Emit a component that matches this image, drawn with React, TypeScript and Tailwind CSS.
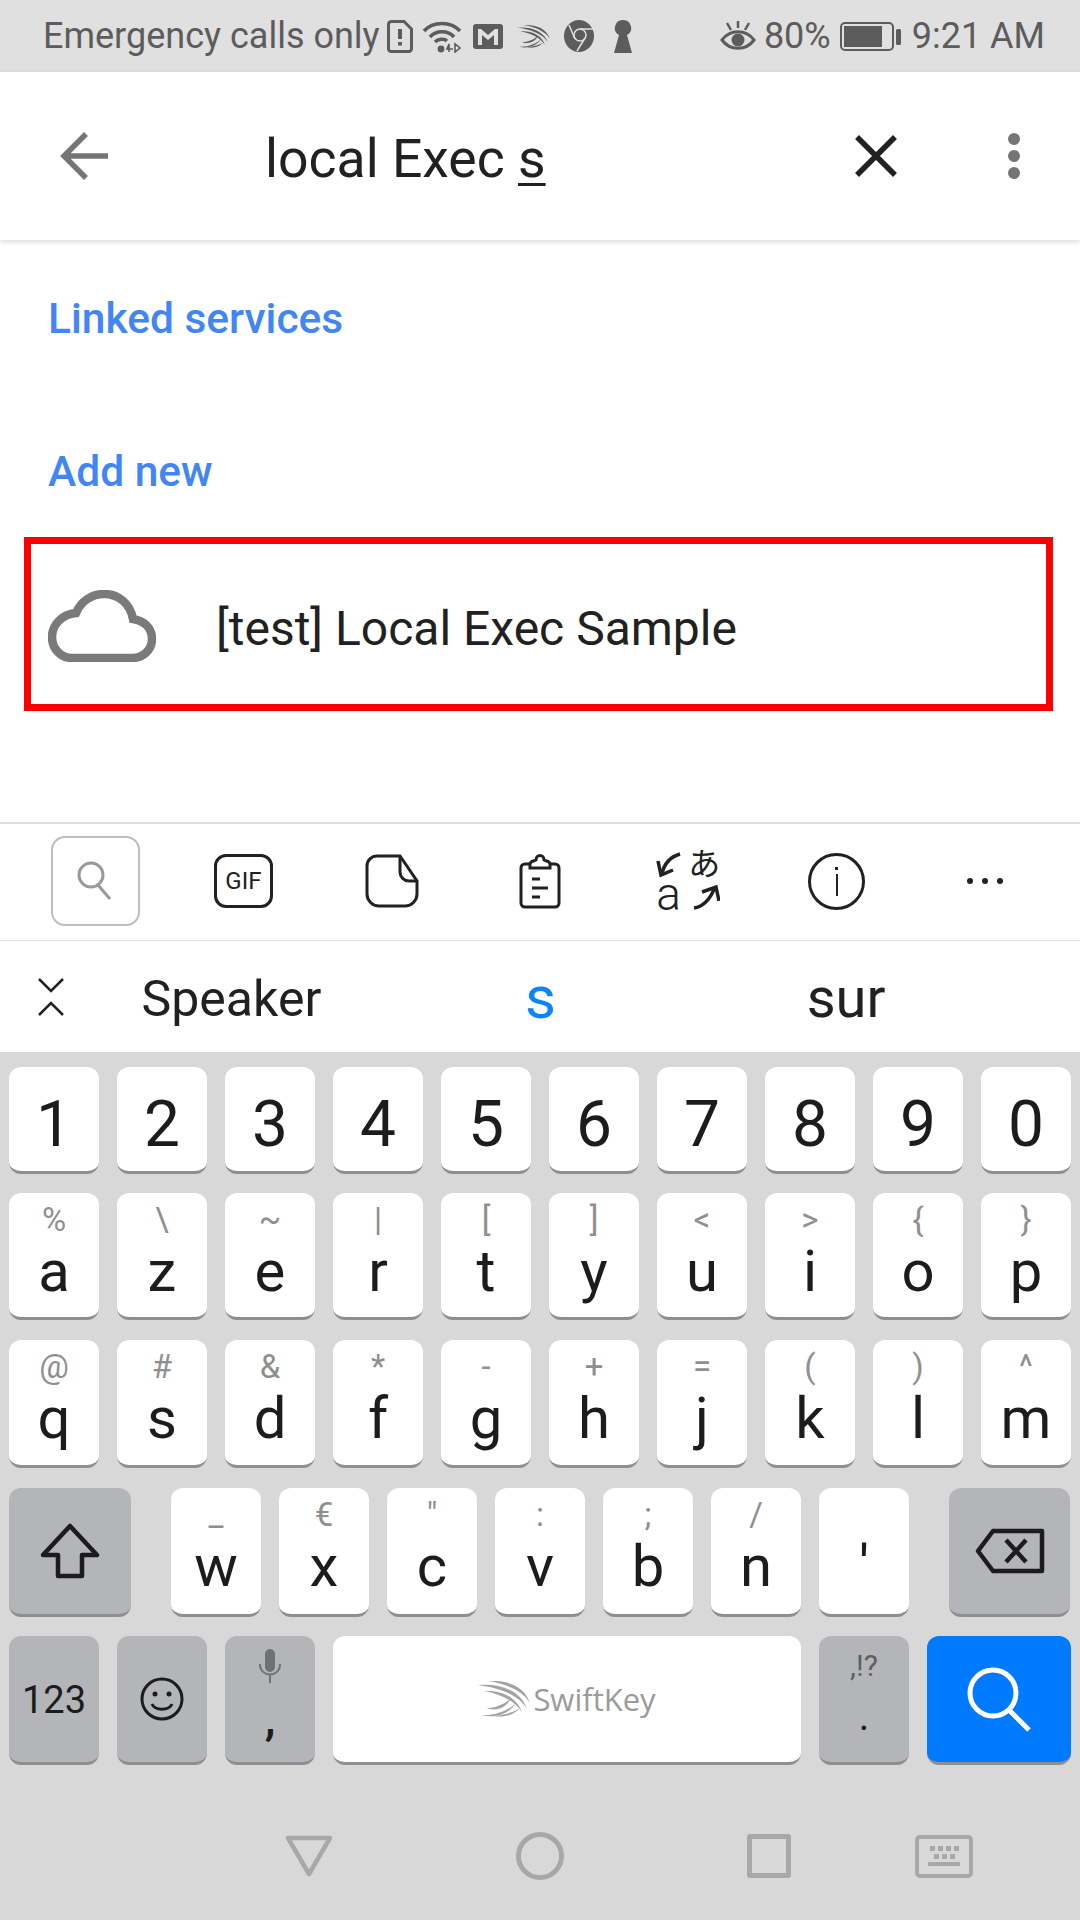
import type { ReactNode } from "react";

const row1 = ["1", "2", "3", "4", "5", "6", "7", "8", "9", "0"];
const row2 = [["a", "%"], ["z", "\\"], ["e", "~"], ["r", "|"], ["t", "["], ["y", "]"], ["u", "<"], ["i", ">"], ["o", "{"], ["p", "}"]];
const row3 = [["q", "@"], ["s", "#"], ["d", "&"], ["f", "*"], ["g", "-"], ["h", "+"], ["j", "="], ["k", "("], ["l", ")"], ["m", "^"]];
const row4 = [["w", "_"], ["x", "€"], ["c", '"'], ["v", ":"], ["b", ";"], ["n", "/"], ["'", ""]];

function SwiftMark({ className, color }: { className: string; color: string }) {
  return (
    <svg viewBox="0 0 52 36" className={className} fill={color}>
      <path d="M10 0C28 -1 46 4 52 22C44 9 28 3 10 0Z" />
      <path d="M0 4C20 2 42 8 49 28C41 14 22 7 0 4Z" />
      <path d="M6 10C22 9 38 15 44 31C36 19 22 13 6 10Z" />
      <path d="M8 27C18 27 27 23 33 17C29 26 19 31 8 27Z" />
      <path d="M3 34C17 35 30 30 38 22C32 32 18 38 3 34Z" />
      <path d="M16 35C26 34 36 31 42 27C36 34 26 37 16 35Z" />
    </svg>
  );
}

function StatusIcons() {
  return (
    <div className="flex items-center">
      <svg viewBox="0 0 26 33" className="ml-[7px] w-[26px] h-[33px]" fill="none" stroke="#5c5c5c" strokeWidth="3">
        <path d="M4 1.5H17L24.5 9V28A3 3 0 0 1 21.5 31.5H4A3 3 0 0 1 1.5 28V4A3 3 0 0 1 4 1.5Z" />
        <path d="M13 9V19M13 22V25.5" strokeWidth="4" />
      </svg>
      <svg viewBox="0 0 40 33" className="ml-[9px] w-[40px] h-[33px]" fill="none" stroke="#5c5c5c" strokeWidth="3.5">
        <path d="M2 11C11 1 29 1 38 11" />
        <path d="M8 17C14 10 26 10 32 17" />
        <path d="M13 22C16 19 22 18 25 21" />
        <circle cx="19" cy="29" r="3.4" fill="#5c5c5c" stroke="none" />
        <path d="M27 32V24L25 29H31M33 24V32L38 28Z" strokeWidth="1.6" />
      </svg>
      <svg viewBox="0 0 30 25" className="ml-[11px] w-[30px] h-[25px]">
        <path fillRule="evenodd" fill="#5c5c5c" d="M3 0H27A3 3 0 0 1 30 3V22A3 3 0 0 1 27 25H3A3 3 0 0 1 0 22V3A3 3 0 0 1 3 0ZM5 5V21H9V11L15 16L21 11V21H25V5H22L15 11L8 5Z" />
      </svg>
      <SwiftMark className="ml-[14px] w-[33px] h-[25px]" color="#5c5c5c" />
      <svg viewBox="0 0 30 32" className="ml-[14px] w-[30px] h-[32px]">
        <ellipse cx="15" cy="16" rx="15" ry="16" fill="#5c5c5c" />
        <circle cx="16" cy="15" r="6" fill="#5c5c5c" stroke="#e0e0e0" strokeWidth="1.5" />
        <path d="M5 5L11 19M16 9H29M21 18L13 31" stroke="#e0e0e0" strokeWidth="1.5" fill="none" />
      </svg>
      <svg viewBox="0 0 18 33" className="ml-[20px] w-[18px] h-[33px]">
        <path fill="#5c5c5c" d="M9 0A8 8 0 0 1 13 15L18 33H0L5 15A8 8 0 0 1 9 0Z" />
      </svg>
    </div>
  );
}

function Key({ children, hint, bg = "bg-white", w = "w-[90px]" }: { children: ReactNode; hint?: string; bg?: string; w?: string }) {
  return (
    <div className={`${w} ${bg} h-full rounded-[12px] border-b-[3px] border-[#8e8e93] flex flex-col items-center pt-[10px] text-[#1c1c1c]`}>
      <span className="h-[34px] text-[33px] leading-[34px] text-[#8f8f8f]">{hint}</span>
      <span className="mt-[5px] text-[58px] leading-[58px]">{children}</span>
    </div>
  );
}

function FnKey({ children, w = "w-[90px]", bg = "bg-[#b3b5b9]", top = false }: { children: ReactNode; w?: string; bg?: string; top?: boolean }) {
  return (
    <div className={`${w} ${bg} h-full rounded-[12px] border-b-[3px] border-[#8e8e93] flex flex-col items-center ${top ? "justify-start pt-[13px]" : "justify-center"} text-[#1c1c1c]`}>
      {children}
    </div>
  );
}

export default function App() {
  return (
    <div className="w-[1080px] h-[1920px] overflow-hidden flex flex-col bg-white font-['Roboto',sans-serif]">
      {/* status bar */}
      <div className="h-[72px] shrink-0 bg-[#e0e0e0] flex items-center pl-[43px] pr-[35px] text-[#5c5c5c] text-[36px] leading-[40px]">
        <span>Emergency calls only</span>
        <StatusIcons />
        <div className="ml-auto flex items-center">
          <svg viewBox="0 0 36 32" className="w-[36px] h-[32px]" fill="none" stroke="#5c5c5c" strokeWidth="3">
            <path d="M2 20C10 9 26 9 34 20C26 31 10 31 2 20Z" />
            <circle cx="18" cy="20" r="6.5" fill="#5c5c5c" stroke="none" />
            <path d="M18 1V8M7 3L11 10M29 3L25 10" strokeWidth="2.5" />
          </svg>
          <span className="ml-[8px]">80%</span>
          <svg viewBox="0 0 61 29" className="ml-[9px] w-[61px] h-[29px]" fill="none">
            <rect x="1" y="1" width="52" height="27" rx="4" stroke="#5c5c5c" strokeWidth="2" />
            <rect x="4" y="4" width="38" height="21" fill="#5c5c5c" />
            <rect x="56" y="7" width="5" height="16" rx="1.5" fill="#5c5c5c" />
          </svg>
          <span className="ml-[11px]">9:21 AM</span>
        </div>
      </div>

      {/* search header */}
      <div className="relative h-[168px] shrink-0 bg-white flex items-center shadow-[0_2px_5px_rgba(0,0,0,0.14)]">
        <svg viewBox="0 0 48 48" className="ml-[60px] w-[48px] h-[48px]" fill="none" stroke="#757575" strokeWidth="5.5">
          <path d="M48 24H4M26 2L4 24L26 46" />
        </svg>
        <span className="ml-[157px] mt-[6px] text-[53.5px] leading-[60px] text-[#212121]">
          local Exec <span className="underline decoration-[3px] underline-offset-[6px]">s</span>
        </span>
        <svg viewBox="0 0 42 42" className="ml-auto w-[42px] h-[42px]" fill="none" stroke="#212121" strokeWidth="5.5">
          <path d="M2 2L40 40M40 2L2 40" />
        </svg>
        <div className="ml-[111px] mr-[60px] flex flex-col gap-[5px]">
          <div className="w-[12px] h-[12px] rounded-full bg-[#757575]" />
          <div className="w-[12px] h-[12px] rounded-full bg-[#757575]" />
          <div className="w-[12px] h-[12px] rounded-full bg-[#757575]" />
        </div>
      </div>

      {/* results */}
      <div className="h-[582px] shrink-0 pt-[57px]">
        <div className="pl-[48px] text-[42.5px] leading-[44px] font-medium text-[#4285f4]">Linked services</div>
        <div className="pl-[48px] mt-[109px] text-[42.5px] leading-[44px] font-medium text-[#4285f4]">Add new</div>
        <div className="ml-[24px] mt-[43px] w-[1029px] h-[174px] border-[7px] border-[#ff0000] flex items-center">
          <svg viewBox="0 0 108 72" className="ml-[17px] mt-[4px] w-[108px] h-[72px]" fill="none" stroke="#7a7a7a" strokeWidth="8.5">
            <path d="M24 68H84C95 68 104 60 104 49C104 38 96 31 85 29C82 13 70 4 56 4C44 4 33 11 28 23C14 24 4 35 4 47C4 59 13 68 24 68Z" />
          </svg>
          <span className="ml-[60px] mt-[9px] text-[48px] leading-[56px] text-[#212121]">[test] Local Exec Sample</span>
        </div>
      </div>

      {/* keyboard toolbar */}
      <div className="h-[118px] shrink-0 border-t-[2px] border-[#dcdcdc] grid grid-cols-7 px-[21px] pb-[2px] items-center justify-items-center bg-white">
        <div className="w-[89px] h-[90px] rounded-[14px] border-[2px] border-[#bdbdbd] flex items-center justify-center">
          <svg viewBox="0 0 36 40" className="w-[36px] h-[40px]" fill="none" stroke="#999999" strokeWidth="3">
            <ellipse cx="14" cy="14" rx="12" ry="12" />
            <path d="M21 24L33 38" />
          </svg>
        </div>
        <div className="w-[59px] h-[54px] rounded-[12px] border-[3px] border-[#212121] flex items-center justify-center text-[24px] leading-[30px] text-[#212121]">GIF</div>
        <svg viewBox="0 0 54 54" className="w-[54px] h-[54px]" fill="none" stroke="#212121" strokeWidth="3">
          <path d="M12 2H35L52 27V40A12 12 0 0 1 40 52H14A12 12 0 0 1 2 40V12A10 10 0 0 1 12 2Z" />
          <path d="M35 2V18A9 9 0 0 0 44 27H52" />
        </svg>
        <svg viewBox="0 0 42 56" className="w-[42px] h-[56px]" fill="none" stroke="#212121" strokeWidth="3">
          <path d="M10 11H6A4 4 0 0 0 2 15V50A4 4 0 0 0 6 54H36A4 4 0 0 0 40 50V15A4 4 0 0 0 36 11H32" />
          <path d="M11 15H31V11C31 8 26 8 25 7C25 1 17 1 17 7C16 8 11 8 11 11Z" />
          <path d="M13 26H21M13 35H29M13 44H21" />
        </svg>
        <div className="relative w-[64px] h-[62px] text-[#212121]">
          <svg viewBox="0 0 64 62" className="absolute inset-0 w-[64px] h-[62px]" fill="none" stroke="#212121" strokeWidth="3.5">
            <path d="M24 4C14 7 8 14 6 24" />
            <path d="M2 11L5 25L17 20" />
            <path d="M38 58C46 57 54 50 58 39" />
            <path d="M46 42L60 37L63 51" />
          </svg>
          <span className="absolute right-0 top-[-8px] text-[32px] leading-[38px] font-['Noto_Sans_CJK_JP',sans-serif]">あ</span>
          <span className="absolute left-0 bottom-[-5px] text-[46px] leading-[46px] font-light">a</span>
        </div>
        <div className="w-[57px] h-[57px] rounded-full border-[3px] border-[#212121] flex flex-col items-center justify-center gap-[4px]">
          <div className="w-[3px] h-[3px] bg-[#212121]" />
          <div className="w-[2px] h-[22px] bg-[#212121]" />
        </div>
        <div className="flex gap-[9px]">
          <div className="w-[6px] h-[6px] rounded-full bg-[#212121]" />
          <div className="w-[6px] h-[6px] rounded-full bg-[#212121]" />
          <div className="w-[6px] h-[6px] rounded-full bg-[#212121]" />
        </div>
      </div>

      {/* suggestions */}
      <div className="h-[112px] shrink-0 border-t-[1px] border-[#e4e4e4] flex items-center bg-white text-[#212121]">
        <div className="w-[78px] flex justify-center pl-[24px]">
          <svg viewBox="0 0 28 40" className="w-[28px] h-[40px]" fill="none" stroke="#212121" strokeWidth="2.5">
            <path d="M2 2L14 14L26 2M2 38L14 26L26 38" />
          </svg>
        </div>
        <div className="w-[307px] mt-[4px] text-center text-[50px] leading-[60px]">Speaker</div>
        <div className="w-[311px] mt-[3px] text-center text-[60px] leading-[60px] text-[#0a84ff]">s</div>
        <div className="w-[300px] mt-[3px] text-center text-[56px] leading-[60px]">sur</div>
      </div>

      {/* keys */}
      <div className="flex-1 bg-[#d8d8d8] pt-[15px] flex flex-col">
        <div className="h-[107px] flex gap-[18px] px-[9px]">
          {row1.map((k) => (
            <div key={k} className="w-[90px] h-full bg-white rounded-[12px] border-b-[3px] border-[#8e8e93] text-center pt-[26px] text-[64px] leading-[64px] text-[#1c1c1c]">
              {k}
            </div>
          ))}
        </div>
        <div className="h-[127px] mt-[19px] flex gap-[18px] px-[9px]">
          {row2.map(([k, h]) => <Key key={k} hint={h}>{k}</Key>)}
        </div>
        <div className="h-[128px] mt-[20px] flex gap-[18px] px-[9px]">
          {row3.map(([k, h]) => <Key key={k} hint={h}>{k}</Key>)}
        </div>
        <div className="h-[129px] mt-[20px] flex px-[9px]">
          <FnKey w="w-[122px]">
            <svg viewBox="0 0 60 56" className="w-[60px] h-[56px]" fill="none" stroke="#1c1c1c" strokeWidth="4.5" strokeLinejoin="round">
              <path d="M30 3L57 32H42V53H18V32H3Z" />
            </svg>
          </FnKey>
          <div className="ml-[40px] flex gap-[18px]">
            {row4.map(([k, h]) => <Key key={k} hint={h}>{k}</Key>)}
          </div>
          <FnKey w="w-[121px] ml-[40px]">
            <svg viewBox="0 0 70 46" className="w-[70px] h-[46px]" fill="none" stroke="#1c1c1c" strokeWidth="4.5" strokeLinejoin="round">
              <path d="M18 3H67V43H18L3 23Z" />
              <path d="M31 12L51 34M51 12L31 34" />
            </svg>
          </FnKey>
        </div>
        <div className="h-[129px] mt-[19px] flex gap-[18px] px-[9px]">
          <FnKey><span className="mt-[2px] text-[38px] leading-[44px]">123</span></FnKey>
          <FnKey>
            <svg viewBox="0 0 44 44" className="w-[44px] h-[44px]" fill="none" stroke="#1c1c1c" strokeWidth="3">
              <circle cx="22" cy="22" r="20" />
              <circle cx="15" cy="17" r="2.5" fill="#1c1c1c" stroke="none" />
              <circle cx="29" cy="17" r="2.5" fill="#1c1c1c" stroke="none" />
              <path d="M12 27C15 34 29 34 32 27" />
            </svg>
          </FnKey>
          <FnKey top>
            <svg viewBox="0 0 24 34" className="w-[24px] h-[34px]" fill="none" stroke="#6f7175" strokeWidth="2">
              <rect x="8" y="1" width="8" height="21" rx="4" fill="#6f7175" />
              <path d="M2 15C2 29 22 29 22 15M12 25V34" />
            </svg>
            <span className="mt-[11px] text-[48px] leading-[48px] font-medium">,</span>
          </FnKey>
          <div className="w-[468px] h-full bg-white rounded-[12px] border-b-[3px] border-[#8e8e93] flex items-center justify-center">
            <SwiftMark className="w-[52px] h-[36px]" color="#a3a3a3" />
            <span className="ml-[3px] text-[31px] leading-[40px] text-[#9b9b9b] font-['Open_Sans',sans-serif]">SwiftKey</span>
          </div>
          <FnKey top>
            <span className="text-[30px] leading-[34px] text-[#5f5f5f]">,!?</span>
            <span className="mt-[14px] text-[40px] leading-[40px]">.</span>
          </FnKey>
          <FnKey w="w-[144px]" bg="bg-[#007aff]">
            <svg viewBox="0 0 66 66" className="w-[66px] h-[66px]" fill="none" stroke="#ffffff" strokeWidth="5">
              <circle cx="27" cy="27" r="23" />
              <path d="M43 44L63 64" />
            </svg>
          </FnKey>
        </div>

        {/* nav bar */}
        <div className="flex-1 flex items-center pt-[27px] pl-[285px]">
          <svg viewBox="0 0 48 42" className="w-[48px] h-[42px]" fill="none" stroke="#a8a8a8" strokeWidth="4.5" strokeLinejoin="round">
            <path d="M3 3H45L24 39Z" />
          </svg>
          <div className="ml-[183px] w-[48px] h-[48px] rounded-full border-[5px] border-[#a8a8a8]" />
          <div className="ml-[183px] w-[44px] h-[44px] rounded-[3px] border-[5px] border-[#a8a8a8]" />
          <div className="ml-[124px] w-[58px] h-[43px] rounded-[5px] border-[4px] border-[#a8a8a8] flex flex-col items-center justify-center gap-[3px]">
            <div className="flex gap-[3px]">
              <div className="w-[5px] h-[5px] bg-[#a8a8a8]" />
              <div className="w-[5px] h-[5px] bg-[#a8a8a8]" />
              <div className="w-[5px] h-[5px] bg-[#a8a8a8]" />
              <div className="w-[5px] h-[5px] bg-[#a8a8a8]" />
            </div>
            <div className="flex gap-[3px]">
              <div className="w-[5px] h-[5px] bg-[#a8a8a8]" />
              <div className="w-[5px] h-[5px] bg-[#a8a8a8]" />
              <div className="w-[5px] h-[5px] bg-[#a8a8a8]" />
            </div>
            <div className="w-[32px] h-[4px] bg-[#a8a8a8]" />
          </div>
        </div>
      </div>
    </div>
  );
}
